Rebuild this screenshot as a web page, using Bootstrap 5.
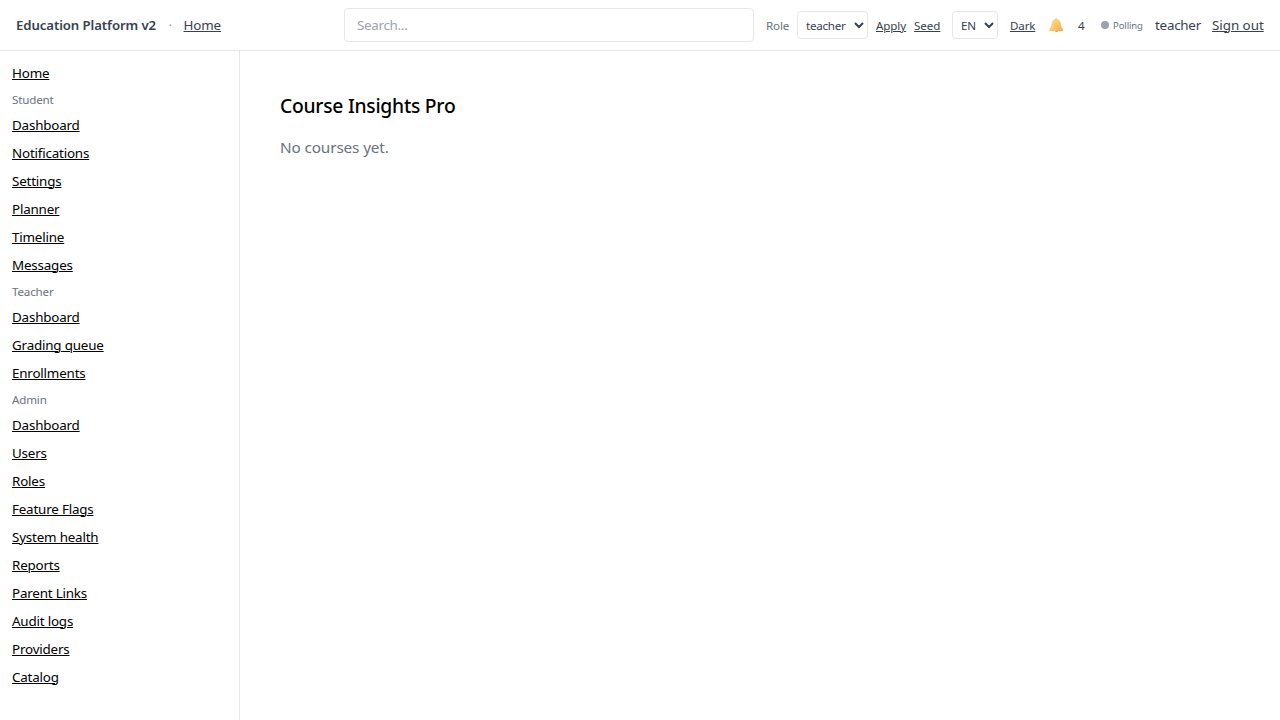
<!DOCTYPE html>
<html lang="en">
<head>
<meta charset="utf-8">
<title>Education Platform v2</title>
<link href="https://cdn.jsdelivr.net/npm/bootstrap@5.3.0/dist/css/bootstrap.min.css" rel="stylesheet">
<style>
body{font-family:"Noto Sans",sans-serif;font-size:13.4px;letter-spacing:-.19px;line-height:20px;color:#000;background:#fff}
a,a:hover{color:inherit;text-underline-offset:1px;text-decoration-thickness:1px}
.topbar{height:51px;border-bottom:1px solid #e5e7eb;color:#374151;padding:0 16px}
.topbar *{white-space:nowrap;flex:none}
.gap-bar{gap:12px}
.brand{width:140.5px;font-size:13.2px;letter-spacing:-.09px;font-weight:600}
.dot-sep{width:3px;color:#9ca3af}
.home{width:38px;letter-spacing:-.15px}
.search{width:410px;height:34px;border:1px solid #e5e7eb;border-radius:4px;padding:0 12px;outline:0;letter-spacing:-.3px;color:#374151}
.search::placeholder{color:#9ca3af}
.tiny{font-size:11.6px;letter-spacing:-.17px;line-height:16px}
.drop{padding-top:2px}
.role-label{width:23px;color:#6b7280}
.apply{width:30px;letter-spacing:-.1px}
.seed{width:26px;letter-spacing:-.05px}
.dark{width:26px}
.pick{height:28px;border:1px solid #e5e7eb;border-radius:4px;background:#fff;color:#374151;padding:4px;letter-spacing:-.25px}
.pick-role{width:71px}
.pick-lang{width:46px}
.bell{width:16px;height:16px}
.count{width:8px;margin:0 3px 0 2px;padding-top:1px}
.poll{width:42px;font-size:9.5px;letter-spacing:-.1px;color:#6b7280}
.poll i{width:8px;height:8px;border-radius:50%;background:#9ca3af}
.poll span{padding-top:1px}
.who{width:45px;letter-spacing:-.25px}
.out{width:52px;letter-spacing:-.04px}
.side{width:240px;height:669px;border-right:1px solid #e5e7eb;padding:12px}
.side .group{color:#6b7280;height:16px;line-height:18px}
.page{padding:40px}
h1{font-size:19.3px;letter-spacing:-.26px;line-height:30px;font-weight:500}
.empty{font-size:15.3px;letter-spacing:-.12px;line-height:24px;color:#6b7280;padding-top:14px}
</style>
</head>
<body>
<header class="topbar d-flex align-items-center justify-content-between">
  <div class="d-flex align-items-center gap-bar">
    <span class="brand">Education Platform v2</span>
    <span class="dot-sep">·</span>
    <a class="home" href="#">Home</a>
  </div>
  <div class="d-flex align-items-center gap-bar">
    <input class="search" type="text" placeholder="Search...">
    <div class="tiny d-flex align-items-center gap-2">
      <span class="role-label drop">Role</span>
      <select class="pick pick-role"><option>teacher</option></select>
      <a class="apply drop" href="#">Apply</a>
      <a class="seed drop" href="#">Seed</a>
    </div>
    <select class="tiny pick pick-lang"><option>EN</option></select>
    <a class="dark tiny drop" href="#">Dark</a>
    <svg class="bell" viewBox="0 0 16 16" aria-label="Notifications">
      <defs><linearGradient id="gold" x1="0" y1="0" x2="1" y2="1"><stop offset="0" stop-color="#ffdf90"/><stop offset=".5" stop-color="#fcca6c"/><stop offset="1" stop-color="#f4a65c"/></linearGradient></defs>
      <path d="M7 13.500h3a1.500 1.500 0 0 1-3 0z" fill="#e8954e"/>
      <path d="M8.200 1c-.7 0-1.200.5-1.300 1.200C5 2.800 3.900 4.300 3.700 6.300 3.500 8.700 3 10.300 1.500 12L1.300 13.900h13.600l-.1-1.900c-1.500-1.600-1.800-3.200-2-5.500-.2-2-1.400-3.700-3.200-4.300C9.500 1.500 9 1 8.200 1z" fill="url(#gold)"/>
    </svg>
    <span class="count tiny">4</span>
    <span class="poll d-flex align-items-center gap-1"><i></i><span>Polling</span></span>
    <span class="who">teacher</span>
    <a class="out" href="#">Sign out</a>
  </div>
</header>
<div class="d-flex">
  <nav class="side d-flex flex-column align-items-start gap-2 flex-shrink-0">
    <a href="#">Home</a>
    <span class="group tiny">Student</span>
    <a href="#">Dashboard</a>
    <a href="#">Notifications</a>
    <a href="#">Settings</a>
    <a href="#">Planner</a>
    <a href="#">Timeline</a>
    <a href="#">Messages</a>
    <span class="group tiny">Teacher</span>
    <a href="#">Dashboard</a>
    <a href="#">Grading queue</a>
    <a href="#">Enrollments</a>
    <span class="group tiny">Admin</span>
    <a href="#">Dashboard</a>
    <a href="#">Users</a>
    <a href="#">Roles</a>
    <a href="#">Feature Flags</a>
    <a href="#">System health</a>
    <a href="#">Reports</a>
    <a href="#">Parent Links</a>
    <a href="#">Audit logs</a>
    <a href="#">Providers</a>
    <a href="#">Catalog</a>
  </nav>
  <main class="page flex-grow-1">
    <h1 class="mb-0">Course Insights Pro</h1>
    <p class="empty mb-0">No courses yet.</p>
  </main>
</div>
<script src="https://cdn.jsdelivr.net/npm/bootstrap@5.3.0/dist/js/bootstrap.bundle.min.js"></script>
</body>
</html>
